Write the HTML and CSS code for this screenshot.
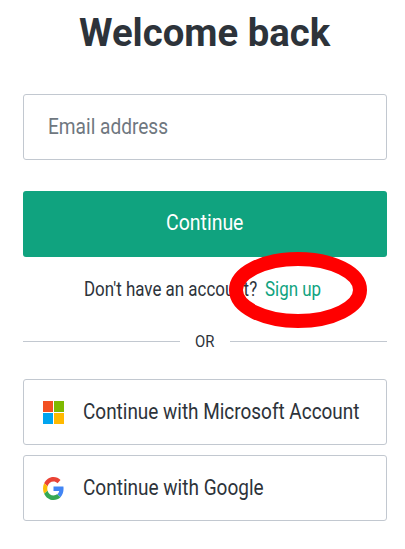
FILE: index.html
```html
<!DOCTYPE html>
<html lang="en">
<head>
<meta charset="utf-8">
<title>Welcome back</title>
<link rel="stylesheet" href="styles.css">
</head>
<body>
<main class="login">
  <h1 class="title"><span class="t-title">Welcome back</span></h1>
  <div class="field"><span class="t-email">Email address</span></div>
  <button class="primary"><span class="t-continue">Continue</span></button>
  <p class="signup">
    <span class="t-question">Don't have an account?</span>
    <a class="link"><span class="t-signup">Sign up</span>
      <svg class="ring" width="138" height="76" viewBox="0 0 138 76"><ellipse cx="69" cy="38" rx="62" ry="31" fill="none" stroke="#f00" stroke-width="14"/></svg>
    </a>
  </p>
  <div class="divider"><span class="t-or">OR</span></div>
  <div class="providers">
    <button class="provider">
      <svg class="icon" width="21" height="23" viewBox="0 0 21 23" preserveAspectRatio="none"><path fill="#f25022" d="M0 0h10v11H0z"/><path fill="#7fba00" d="M11 0h10v11H11z"/><path fill="#00a4ef" d="M0 12h10v11H0z"/><path fill="#ffb900" d="M11 12h10v11H11z"/></svg>
      <span class="t-microsoft">Continue with Microsoft Account</span>
    </button>
    <button class="provider">
      <svg class="icon" width="21" height="23" viewBox="0 0 48 48" preserveAspectRatio="none"><path fill="#ea4335" d="M24 9.5c3.54 0 6.71 1.22 9.21 3.6l6.85-6.85C35.9 2.38 30.47 0 24 0 14.62 0 6.51 5.38 2.56 13.22l7.98 6.19C12.43 13.72 17.74 9.5 24 9.5z"/><path fill="#4285f4" d="M46.98 24.55c0-1.57-.15-3.09-.38-4.55H24v9.02h12.94c-.58 2.96-2.26 5.48-4.78 7.18l7.73 6c4.51-4.18 7.09-10.36 7.09-17.65z"/><path fill="#fbbc05" d="M10.53 28.59c-.48-1.45-.76-2.99-.76-4.59s.27-3.14.76-4.59l-7.98-6.19C.92 16.46 0 20.12 0 24c0 3.88.92 7.54 2.56 10.78l7.97-6.19z"/><path fill="#34a853" d="M24 48c6.48 0 11.93-2.13 15.89-5.81l-7.73-6c-2.15 1.45-4.92 2.3-8.16 2.3-6.26 0-11.57-4.22-13.47-9.91l-7.98 6.19C6.51 42.62 14.62 48 24 48z"/></svg>
      <span class="t-google">Continue with Google</span>
    </button>
  </div>
</main>
</body>
</html>
```
FILE: styles.css
```css
* { box-sizing: border-box; }
body { margin: 0; background: #fff; color: #2d333a; font-family: Roboto, "Liberation Sans", sans-serif; }
.login { height: 549px; padding: 9px 18px 0 23px; display: flex; flex-direction: column; }
span { display: inline-block; white-space: nowrap; transform-origin: left center; }
.title { margin: 0 0 37px; padding-left: 56px; height: 48px; font-size: 38px; line-height: 48px; font-weight: 700; }
.t-title { transform: scaleX(1.008); }
.field { height: 66px; border: 1px solid #c2c8d0; border-radius: 3px; padding-left: 23.5px; font-size: 22px; line-height: 64px; color: #6f7780; }
.t-email { transform: scaleX(.868); }
.primary { height: 66px; margin: 31px 0 0; padding: 0 0 2px 143px; border: 0; border-radius: 3px; background: #10a37f; color: #fff; font: 22px/64px Roboto, sans-serif; text-align: left; }
.t-continue { transform: scaleX(.885); }
.signup { display: flex; margin: 21px 0 0; padding-left: 61px; height: 24px; font-size: 19.5px; line-height: 24px; }
.t-question { width: 181px; transform: scaleX(.868); }
.link { position: relative; color: #10a37f; }
.t-signup { transform: scaleX(.868); }
.ring { position: absolute; left: -36px; top: -26px; }
.divider { display: flex; align-items: center; gap: 15px; height: 20px; margin-top: 29px; font-size: 16.5px; line-height: 20px; }
.divider::before, .divider::after { content: ""; flex: 0 0 157px; height: 1px; background: #c2c8d0; }
.t-or { width: 20px; padding-top: 1px; transform: scaleX(.9); }
.providers { display: flex; flex-direction: column; gap: 10px; margin-top: 28px; }
.provider { display: flex; align-items: center; gap: 19px; height: 66px; padding: 0 0 0 19px; border: 1px solid #c2c8d0; border-radius: 3px; background: #fff; color: #2d333a; font: 22px/64px Roboto, sans-serif; text-align: left; }
.t-microsoft { transform: scaleX(.861); }
.t-google { transform: scaleX(.864); }
.icon { flex: none; }
```
